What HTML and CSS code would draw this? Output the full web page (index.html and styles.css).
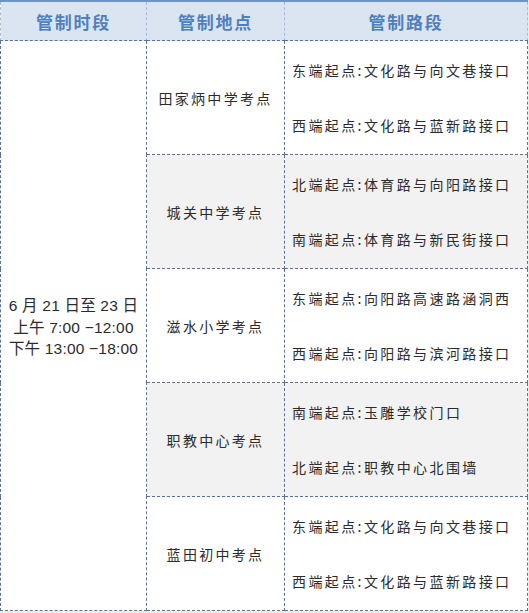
FILE: index.html
```html
<!DOCTYPE html>
<html lang="zh">
<head>
<meta charset="utf-8">
<link rel="stylesheet" href="styles.css">
</head>
<body>
<table class="tbl">
  <colgroup>
    <col class="c1"><col class="c2"><col class="c3">
  </colgroup>
  <thead>
    <tr><th>管制时段</th><th>管制地点</th><th>管制路段</th></tr>
  </thead>
  <tbody>
    <tr>
      <td class="time" rowspan="5"><div class="tw">6 月 21 日至 23 日<br>上午 7:00 −12:00<br>下午 13:00 −18:00</div></td>
      <td class="place">田家炳中学考点</td>
      <td class="route"><div class="r1">东端起点:文化路与向文巷接口</div><div class="r2">西端起点:文化路与蓝新路接口</div></td>
    </tr>
    <tr class="alt">
      <td class="place">城关中学考点</td>
      <td class="route"><div class="r1">北端起点:体育路与向阳路接口</div><div class="r2">南端起点:体育路与新民街接口</div></td>
    </tr>
    <tr>
      <td class="place">滋水小学考点</td>
      <td class="route"><div class="r1">东端起点:向阳路高速路涵洞西</div><div class="r2">西端起点:向阳路与滨河路接口</div></td>
    </tr>
    <tr class="alt">
      <td class="place">职教中心考点</td>
      <td class="route"><div class="r1">南端起点:玉雕学校门口</div><div class="r2">北端起点:职教中心北围墙</div></td>
    </tr>
    <tr>
      <td class="place">蓝田初中考点</td>
      <td class="route"><div class="r1">东端起点:文化路与向文巷接口</div><div class="r2">西端起点:文化路与蓝新路接口</div></td>
    </tr>
  </tbody>
</table>
</body>
</html>
```
FILE: styles.css
```css
html, body {
  margin: 0;
  padding: 0;
  background: #e3f1ea;
}
body {
  font-family: "Noto Sans CJK SC", "Noto Sans", sans-serif;
  color: #2b2b2b;
}
.tbl {
  border-collapse: collapse;
  table-layout: fixed;
  width: 527px;
  background: #fff;
}
.c1 { width: 146px; }
.c2 { width: 138px; }
.c3 { width: 243px; }
.tbl th {
  height: 38px;
  padding: 0;
  background: #dbe5f1;
  color: #4f7fbc;
  font-size: 17px;
  font-weight: bold;
  letter-spacing: 1.8px;
  border-top: 2px solid #6f93c3;
  border-bottom: 1px dashed #5b7396;
  border-left: 1px dashed #a9bcd6;
  border-right: 1px dashed #a9bcd6;
}
.tbl td {
  border: 1px dashed #5b7396;
  padding: 0;
  height: 113px;
  font-size: 14px;
  vertical-align: middle;
}
.tbl .time {
  text-align: center;
  font-family: "Liberation Sans", "Noto Sans CJK SC", sans-serif;
  font-size: 15.5px;
  line-height: 21.5px;
  letter-spacing: 0.2px;
}
.tw {
  padding-top: 4px;
  white-space: nowrap;
}
.tbl .place {
  text-align: center;
  letter-spacing: 2.3px;
}
.tbl .route {
  padding-left: 7px;
  letter-spacing: 2.4px;
}
.route .r1, .route .r2 {
  line-height: 21px;
  white-space: nowrap;
}
.route .r2 {
  margin-top: 34px;
}
.alt .place, .alt .route {
  background: #f2f2f2;
}
```
